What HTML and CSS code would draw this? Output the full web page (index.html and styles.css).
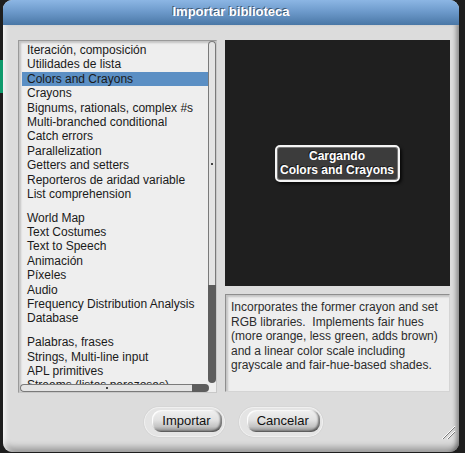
FILE: index.html
```html
<!DOCTYPE html>
<html lang="es">
<head>
<meta charset="utf-8">
<title>Importar biblioteca</title>
<link rel="stylesheet" href="styles.css">
</head>
<body>
<div class="behind"></div>
<div class="dialog">
  <div class="title">Importar biblioteca</div>
  <div class="body">
    <div class="main">
      <div class="list">
        <div class="items">
          <div class="item">Iteración, composición</div>
          <div class="item">Utilidades de lista</div>
          <div class="item selected">Colors and Crayons</div>
          <div class="item">Crayons</div>
          <div class="item">Bignums, rationals, complex #s</div>
          <div class="item">Multi-branched conditional</div>
          <div class="item">Catch errors</div>
          <div class="item">Parallelization</div>
          <div class="item">Getters and setters</div>
          <div class="item">Reporteros de aridad variable</div>
          <div class="item">List comprehension</div>
          <div class="sep"></div>
          <div class="item">World Map</div>
          <div class="item">Text Costumes</div>
          <div class="item">Text to Speech</div>
          <div class="item">Animación</div>
          <div class="item">Píxeles</div>
          <div class="item">Audio</div>
          <div class="item">Frequency Distribution Analysis</div>
          <div class="item">Database</div>
          <div class="sep"></div>
          <div class="item">Palabras, frases</div>
          <div class="item">Strings, Multi-line input</div>
          <div class="item">APL primitives</div>
          <div class="item">Streams (listas perezosas)</div>
        </div>
        <div class="vscroll">
          <div class="vthumb"><span class="dot"></span></div>
          <div class="vtrack"></div>
        </div>
        <div class="hscroll">
          <div class="hthumb"><span class="dot"></span></div>
          <div class="htrack"></div>
        </div>
      </div>
      <div class="side">
        <div class="preview">
          <div class="loading">Cargando<br>Colors and Crayons</div>
        </div>
        <div class="desc">Incorporates the former crayon and set<br>RGB libraries.&nbsp; Implements fair hues<br>(more orange, less green, adds brown)<br>and a linear color scale including<br>grayscale and fair-hue-based shades.</div>
      </div>
    </div>
    <div class="buttons">
      <div class="btn"><div class="btn-face">Importar</div></div>
      <div class="btn"><div class="btn-face">Cancelar</div></div>
    </div>
  </div>
  <svg class="resize" width="16" height="16" viewBox="0 0 16 16">
    <line x1="2" y1="15" x2="15" y2="2" stroke="#ffffff" stroke-width="1"/>
    <line x1="3" y1="15" x2="15" y2="3" stroke="#7a7a7a" stroke-width="1"/>
    <line x1="7" y1="15" x2="15" y2="7" stroke="#ffffff" stroke-width="1"/>
    <line x1="8" y1="15" x2="15" y2="8" stroke="#7a7a7a" stroke-width="1"/>
  </svg>
</div>
</body>
</html>
```

FILE: styles.css
```css
html, body {
  margin: 0;
  padding: 0;
}

body {
  width: 465px;
  height: 453px;
  background: #1e1e1e;
  font-family: "Liberation Sans", Arial, sans-serif;
  font-size: 12px;
  position: relative;
  overflow: hidden;
}

.behind {
  position: absolute;
  left: 0;
  top: 60px;
  width: 4px;
  height: 33px;
  background: #0e9a6c;
}

.dialog {
  position: relative;
  margin-left: 3px;
  width: 456px;
  height: 452px;
  border-radius: 9px;
  overflow: hidden;
  display: flex;
  flex-direction: column;
  background: #dcdcdc;
}

.title {
  height: 25px;
  flex: none;
  background: linear-gradient(#8cb6e4, #6e9bcc 45%, #4a77a6);
  color: #ffffff;
  font-weight: bold;
  font-size: 13px;
  line-height: 24px;
  text-align: center;
  text-shadow: -1px -1px 0 rgba(0, 0, 0, 0.45);
}

.body {
  flex: 1;
  padding: 15px 0 0 15px;
  box-shadow:
    inset 5px 0 5px -3px rgba(255, 255, 255, 0.8),
    inset -5px 0 4px -2px rgba(0, 0, 0, 0.35),
    inset 0 -11px 6px -6px rgba(0, 0, 0, 0.28);
  border-radius: 0 0 9px 9px;
}

.main {
  display: flex;
  gap: 8px;
  height: 353px;
}

.list {
  position: relative;
  width: 199px;
  height: 353px;
  box-sizing: border-box;
  background: #eeeeee;
  border: 1px solid #9a9a9a;
  border-right-color: #c8c8c8;
  border-bottom-color: #c8c8c8;
  box-shadow: inset 2px 2px 2px rgba(0, 0, 0, 0.18);
  overflow: hidden;
}

.items {
  padding: 2px 7px 0 3px;
  height: 343px;
  overflow: hidden;
}

.item {
  height: 14.4px;
  line-height: 14.4px;
  padding-left: 5px;
  color: #1a1a1a;
  white-space: nowrap;
}

.item.selected {
  background: #5b8fc4;
}

.sep {
  height: 9.4px;
}

.vscroll {
  position: absolute;
  right: 0;
  top: 0;
  width: 8px;
  height: 342px;
  display: flex;
  flex-direction: column;
}

.vthumb {
  height: 244px;
  background: #e4e4e4;
  border: 1px solid #7a7a7a;
  border-bottom: none;
  border-radius: 4px 4px 0 0;
  box-sizing: border-box;
  display: flex;
  align-items: center;
  justify-content: center;
}

.vtrack {
  flex: 1;
  background: #5d5d5d;
  border-radius: 0 0 4px 4px;
}

.hscroll {
  position: absolute;
  left: 1px;
  bottom: 0;
  width: 189px;
  height: 8px;
  display: flex;
}

.hthumb {
  width: 172px;
  background: #e4e4e4;
  border: 1px solid #7a7a7a;
  border-right: none;
  border-radius: 4px 0 0 4px;
  box-sizing: border-box;
  display: flex;
  align-items: center;
  justify-content: center;
}

.htrack {
  flex: 1;
  background: #5d5d5d;
  border-radius: 0 4px 4px 0;
}

.dot {
  width: 2px;
  height: 2px;
  background: #444444;
}

.side {
  width: 225px;
  display: flex;
  flex-direction: column;
  gap: 8px;
}

.preview {
  height: 246px;
  background: #1f1f1f;
  display: flex;
  align-items: center;
  justify-content: center;
}

.loading {
  margin-top: 1px;
  background: #3c3c3c;
  border: 2px solid #f4f4f4;
  border-radius: 5px;
  box-shadow: 2px 2px 3px rgba(0, 0, 0, 0.7), inset 0 0 0 1px #777777;
  color: #ffffff;
  font-weight: bold;
  font-size: 12px;
  line-height: 14px;
  text-align: center;
  padding: 2px 4px 3px 3px;
  text-shadow: -1px -1px 0 rgba(0, 0, 0, 0.6);
}

.desc {
  height: 98px;
  box-sizing: border-box;
  background: #eeeeee;
  border: 1px solid #8e8e8e;
  border-right-color: #d4d4d4;
  border-bottom-color: #d4d4d4;
  box-shadow: inset 2px 2px 2px rgba(0, 0, 0, 0.18);
  color: #2c2c2c;
  padding: 5px 0 0 5px;
  line-height: 14.5px;
  white-space: nowrap;
}

.buttons {
  display: flex;
  justify-content: center;
  gap: 14px;
  margin-top: 14px;
  padding-right: 10px;
}

.btn {
  height: 30px;
  box-sizing: border-box;
  border-radius: 15px;
  padding: 3px 3px 5px 8px;
  background: #e4e4e4;
  box-shadow: inset 0 0 0 1px #f0f0f0, 0 0 1px rgba(0, 0, 0, 0.25);
}

.btn-face {
  height: 22px;
  line-height: 22px;
  padding: 0 11px 0 10px;
  border-radius: 9px;
  background: linear-gradient(#f0f0f0, #e2e2e2 45%, #c4c4c4 75%, #868686);
  box-shadow: inset -2px -1px 2px rgba(0, 0, 0, 0.45), inset 1px 1px 1px #ffffff;
  color: #111111;
  font-size: 13px;
}

.resize {
  position: absolute;
  right: 3px;
  bottom: 12px;
}
```
